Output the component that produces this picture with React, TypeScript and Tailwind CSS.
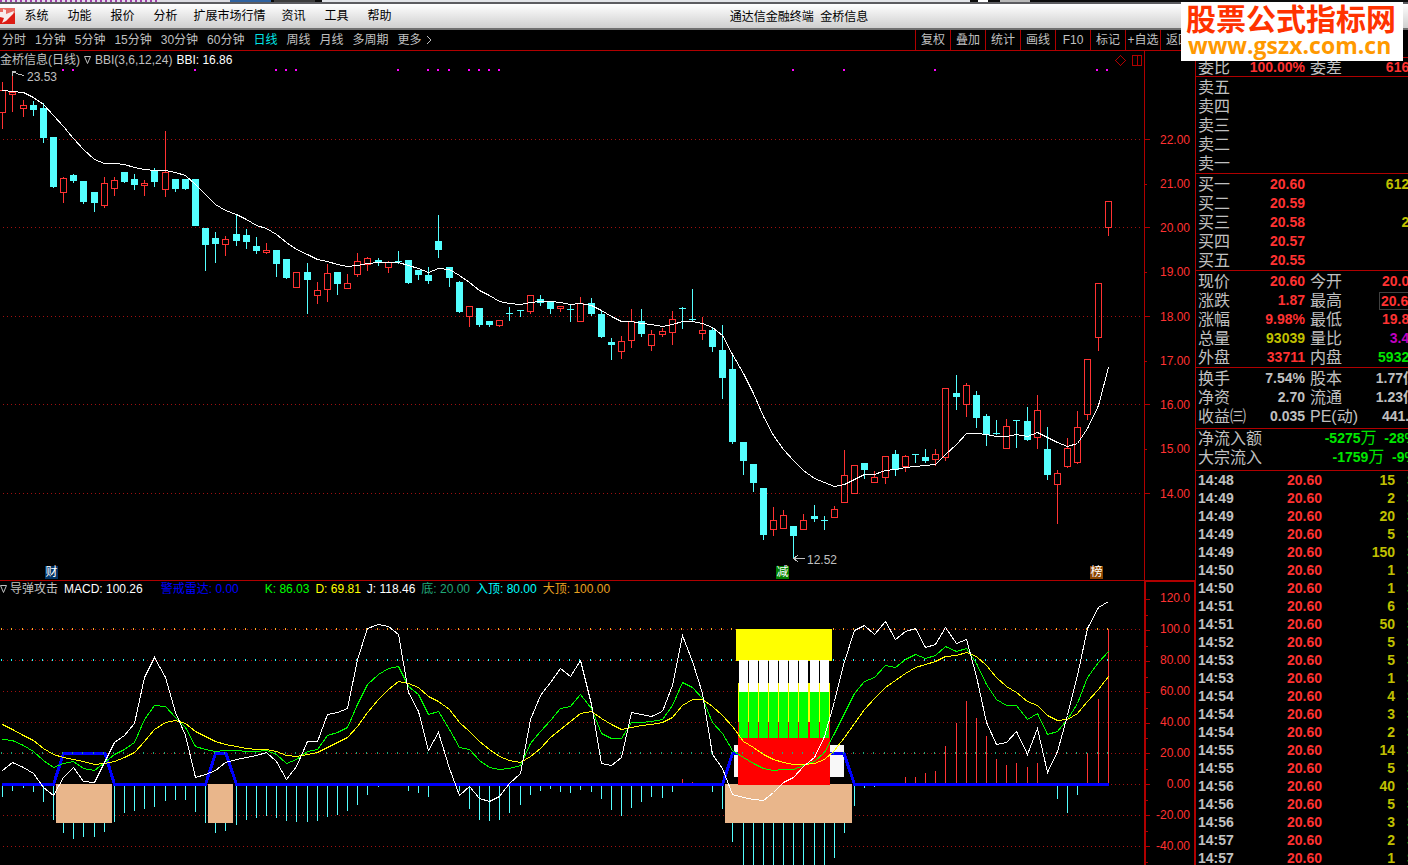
import React from "react";

type Candle = [kind: "r" | "c", high: number, top: number, bottom: number, low: number];

const PLOT_W = 1144;
const PRICE_TOP = 51;
const PRICE_H = 529;
const IND_TOP = 581;
const IND_H = 284;

const UP = "#ff3232";
const DOWN = "#54ffff";
const FRAME = "#b00000";

const barX = (i: number) => Math.floor(2.83 + 10.1412 * i);

const candles: Candle[] = [
  ["r", 82, 90, 113, 129], ["r", 73, 92, 95, 112], ["r", 100, 105, 109, 117], ["c", 101, 105, 110, 116],
  ["c", 103, 108, 138, 143], ["c", 137, 137, 187, 188], ["r", 177, 178, 193, 203], ["c", 174, 175, 181, 183],
  ["c", 181, 181, 202, 204], ["c", 192, 192, 203, 212], ["r", 177, 183, 206, 208], ["r", 177, 180, 189, 196],
  ["c", 172, 172, 182, 183], ["c", 174, 179, 185, 190], ["r", 180, 183, 186, 196], ["c", 168, 171, 182, 187],
  ["r", 131, 172, 190, 197], ["c", 179, 179, 189, 192], ["c", 179, 179, 189, 190], ["c", 179, 179, 226, 226],
  ["c", 228, 228, 245, 271], ["c", 232, 238, 244, 263], ["r", 236, 239, 245, 256], ["c", 214, 234, 241, 246],
  ["c", 229, 235, 242, 249], ["c", 237, 246, 251, 254], ["r", 243, 250, 253, 254], ["c", 250, 250, 264, 277],
  ["c", 259, 259, 278, 279], ["r", 272, 272, 288, 288], ["c", 263, 272, 280, 314], ["r", 282, 290, 296, 304],
  ["r", 264, 273, 290, 302], ["c", 272, 272, 284, 295], ["r", 274, 283, 289, 289], ["r", 253, 261, 275, 277],
  ["r", 257, 258, 265, 271], ["c", 258, 260, 263, 266], ["r", 261, 262, 268, 273], ["c", 251, 261, 262, 264],
  ["c", 260, 260, 283, 284], ["c", 270, 270, 275, 280], ["c", 267, 275, 281, 284], ["c", 215, 241, 250, 258],
  ["c", 267, 267, 278, 287], ["c", 281, 282, 312, 313], ["r", 306, 306, 317, 327], ["c", 308, 308, 325, 327],
  ["c", 321, 321, 325, 327], ["r", 320, 320, 326, 327], ["c", 307, 313, 314, 321], ["c", 310, 310, 311, 317],
  ["r", 295, 295, 312, 314], ["c", 295, 299, 303, 306], ["c", 301, 301, 309, 314], ["r", 306, 306, 309, 312],
  ["c", 305, 309, 310, 322], ["r", 297, 303, 322, 322], ["c", 298, 303, 314, 316], ["c", 310, 314, 337, 338],
  ["c", 338, 342, 345, 360], ["r", 336, 341, 352, 359], ["r", 309, 321, 341, 348], ["c", 309, 321, 334, 337],
  ["r", 330, 334, 346, 351], ["r", 328, 331, 335, 337], ["r", 311, 319, 333, 345], ["c", 307, 308, 309, 329],
  ["c", 289, 319, 320, 321], ["r", 317, 330, 334, 340], ["c", 327, 330, 347, 352], ["c", 325, 350, 378, 399],
  ["c", 356, 369, 442, 444], ["c", 442, 442, 461, 475], ["c", 464, 464, 483, 492], ["c", 488, 488, 535, 540],
  ["r", 507, 520, 530, 536], ["r", 510, 515, 529, 529], ["c", 526, 526, 536, 558], ["r", 514, 520, 530, 530],
  ["c", 505, 516, 519, 522], ["c", 516, 520, 521, 530], ["r", 506, 509, 518, 518], ["r", 450, 475, 503, 503],
  ["r", 465, 465, 494, 494], ["c", 463, 463, 470, 479], ["r", 471, 477, 483, 483], ["r", 456, 456, 478, 484],
  ["c", 450, 454, 470, 476], ["r", 455, 456, 467, 472], ["c", 454, 454, 455, 463], ["c", 449, 457, 461, 463],
  ["r", 449, 454, 460, 466], ["r", 388, 388, 458, 461], ["c", 375, 393, 397, 410], ["r", 383, 385, 405, 417],
  ["c", 391, 395, 418, 428], ["c", 414, 416, 435, 446], ["c", 420, 433, 434, 435], ["r", 419, 426, 449, 449],
  ["c", 420, 420, 421, 448], ["c", 407, 421, 440, 441], ["r", 395, 410, 438, 449], ["c", 427, 449, 475, 480],
  ["r", 470, 473, 485, 524], ["r", 438, 448, 467, 468], ["r", 411, 427, 463, 464], ["r", 359, 359, 415, 420],
  ["r", 283, 283, 338, 351], ["r", 201, 201, 228, 236],
];

const bbi = [
  90, 91, 92, 97, 104, 115, 126, 138, 149, 159, 163, 163, 164, 167, 169, 170, 170, 172, 175, 184, 194, 204, 210, 214,
  219, 225, 228, 234, 242, 249, 254, 259, 261, 264, 266, 265, 263, 262, 262, 262, 265, 268, 272, 268, 269, 275, 282,
  290, 295, 301, 303, 304, 302, 301, 301, 302, 304, 303, 305, 310, 316, 321, 321, 323, 324, 326, 324, 321, 321, 323,
  327, 335, 354, 373, 393, 416, 435, 449, 460, 470, 478, 482, 486, 484, 479, 474, 474, 470, 469, 467, 466, 465, 464,
  454, 444, 433, 433, 434, 436, 436, 434, 436, 432, 437, 442, 446, 443, 428, 405, 367,
];

const lineJ = [
  770, 762, 767, 773, 787, 795, 777, 767, 781, 782, 762, 742, 735, 723, 677, 657, 677, 712, 735, 777, 774, 770, 762,
  759, 757, 755, 752, 761, 779, 766, 741, 741, 714, 712, 708, 659, 628, 624, 626, 634, 692, 711, 750, 732, 768, 795,
  786, 798, 801, 796, 783, 773, 719, 695, 682, 668, 676, 660, 704, 763, 765, 757, 712, 714, 716, 711, 685, 635, 661,
  693, 754, 768, 794, 797, 799, 800, 792, 782, 777, 766, 757, 736, 701, 661, 630, 625, 634, 621, 639, 631, 628, 647,
  644, 627, 643, 639, 676, 722, 744, 742, 731, 754, 728, 772, 751, 715, 675, 628, 607, 601,
];

const lineK = [
  739, 740, 745, 751, 760, 767, 763, 761, 768, 770, 762, 754, 749, 742, 719, 705, 706, 717, 727, 746, 749, 751, 750,
  750, 751, 751, 750, 754, 763, 759, 751, 749, 735, 732, 727, 704, 684, 674, 668, 666, 686, 694, 714, 711, 729, 747,
  749, 760, 767, 769, 768, 765, 743, 731, 720, 708, 706, 694, 708, 733, 738, 738, 722, 722, 721, 719, 705, 682, 687,
  698, 722, 733, 750, 757, 763, 768, 770, 769, 769, 765, 761, 752, 733, 713, 693, 681, 677, 665, 667, 659, 654, 658,
  655, 646, 651, 648, 663, 684, 699, 705, 705, 719, 713, 734, 731, 719, 703, 677, 662, 651,
];

const lineD = [
  724, 729, 735, 740, 748, 754, 757, 759, 761, 764, 763, 761, 757, 752, 741, 729, 722, 720, 723, 731, 736, 741, 744,
  746, 748, 749, 749, 751, 755, 756, 754, 752, 747, 742, 737, 726, 712, 699, 689, 681, 683, 687, 696, 701, 709, 722,
  731, 741, 749, 756, 760, 762, 756, 748, 737, 729, 721, 713, 711, 718, 724, 729, 727, 725, 724, 722, 717, 705, 699,
  699, 706, 715, 726, 741, 747, 754, 759, 762, 764, 764, 763, 759, 750, 737, 723, 709, 698, 687, 680, 673, 667, 664,
  661, 656, 655, 652, 656, 665, 677, 686, 692, 701, 705, 715, 720, 719, 713, 701, 689, 676,
];

// End of each histogram bar; 784 is the zero line, 0 means no bar.
const histogram = [
  797, 791, 788, 792, 802, 820, 833, 839, 837, 837, 832, 822, 813, 811, 809, 807, 801, 800, 800, 812, 823, 833, 831,
  825, 820, 818, 816, 818, 821, 822, 822, 821, 817, 815, 811, 805, 795, 787, 0, 0, 791, 793, 797, 0, 0, 791, 809, 820,
  821, 820, 813, 805, 795, 791, 789, 792, 793, 790, 792, 799, 810, 816, 808, 802, 797, 798, 792, 779, 782, 0, 792,
  809, 842, 865, 865, 865, 865, 865, 865, 865, 865, 865, 858, 833, 806, 788, 787, 0, 0, 777, 777, 773, 771, 746, 723,
  701, 718, 736, 759, 765, 763, 767, 763, 0, 799, 813, 795, 753, 699, 629,
];

const toPoints = (ys: number[]) => ys.map((y, i) => `${barX(i) + 0.5},${y + 0.5}`).join(" ");

const signalDots = [63, 73, 195, 276, 286, 296, 398, 428, 438, 449, 469, 479, 489, 499, 793, 844, 935, 1097, 1107];

function GridLine({ y }: { y: number }) {
  return <line x1="3" x2="1141" y1={y + 0.5} y2={y + 0.5} stroke="#a01010" strokeDasharray="1 3" />;
}

function PriceChart() {
  return (
    <svg
      className="absolute inset-0 size-full"
      viewBox={`0 ${PRICE_TOP} ${PLOT_W} ${PRICE_H}`}
      preserveAspectRatio="none"
      shapeRendering="crispEdges"
      fill="none"
      aria-hidden="true"
    >
      {[139, 227, 316, 404, 493].map((y) => (
        <GridLine key={y} y={y} />
      ))}
      {signalDots.map((x) => (
        <rect key={x} x={x - 1} y="69" width="2" height="2" fill="#ff00ff" />
      ))}
      {candles.map(([kind, high, top, bottom, low], i) => {
        const x = barX(i);
        if (kind === "c") {
          return (
            <g key={i} fill={DOWN}>
              <rect x={x} y={high} width="1" height={low - high} />
              <rect x={x - 3} y={top} width="7" height={bottom - top} />
            </g>
          );
        }
        return (
          <g key={i}>
            {top > high && <rect x={x} y={high} width="1" height={top - high} fill={UP} />}
            {low > bottom && <rect x={x} y={bottom} width="1" height={low - bottom} fill={UP} />}
            <rect x={x - 2.5} y={top + 0.5} width="6" height={bottom - top - 1} stroke={UP} />
          </g>
        );
      })}
      <polyline points={toPoints(bbi)} stroke="#fff" />
      <path d="M12.5 76V71.5H16M12.5 71.5L18 74L24 75.5" stroke="#c0c0c0" />
      <path d="M793.5 558.5H805M793.5 558.5L798 555M793.5 558.5L798 562" stroke="#c0c0c0" />
      <path d="M1115.5 60.5L1120.5 55.5L1125.5 60.5L1120.5 65.5Z" stroke={FRAME} />
      <path d="M1132.5 55.5H1141.5V65.5H1132.5ZM1137.5 55.5V65.5" stroke={FRAME} />
    </svg>
  );
}

function IndicatorChart() {
  const cells = [739, 749, 759, 769, 779, 789, 799, 810, 820];
  return (
    <svg
      className="absolute inset-0 size-full"
      viewBox={`0 ${IND_TOP} ${PLOT_W} ${IND_H}`}
      preserveAspectRatio="none"
      shapeRendering="crispEdges"
      fill="none"
      aria-hidden="true"
    >
      {[629, 660, 691, 722, 753, 784, 815, 846].map((y) => (
        <GridLine key={y} y={y} />
      ))}
      {histogram.map((end, i) =>
        end === 0 ? null : end > 784 ? (
          <rect key={i} x={barX(i)} y="784" width="1" height={end - 784} fill={DOWN} />
        ) : (
          <rect key={i} x={barX(i)} y={end} width="1" height={784 - end} fill={UP} />
        ),
      )}
      <rect x="734" y="745" width="110" height="32" fill="#f8f8f8" />
      <polyline
        points="2,784.5 53.5,784.5 63.5,753.5 105,753.5 114.5,784.5 205.5,784.5 215.5,753.5 226,753.5 236.5,784.5 722.5,784.5 732.5,753.5 844,753.5 854.5,784.5 1109,784.5"
        stroke="#0000ff"
        strokeWidth="3"
      />
      <g fill="#e9b68b">
        <rect x="56" y="784" width="56" height="39" />
        <rect x="208" y="784" width="25" height="39" />
        <rect x="725" y="784" width="127" height="39" />
      </g>
      <rect x="736" y="629" width="96" height="32" fill="#ffff00" />
      <rect x="738" y="661" width="92" height="22" fill="#000" />
      <rect x="738" y="683" width="92" height="39" fill="#ffff00" />
      <rect x="738" y="722" width="92" height="63" fill="#ff0000" />
      {cells.map((x) => (
        <g key={x}>
          <rect x={x} y="660" width="9" height="32" fill="#fff" />
          <rect x={x} y="692" width="9" height="46" fill="#00ff00" />
        </g>
      ))}
      {candles.map((_, i) => (
        <g key={i}>
          {(barX(i) < 736 || barX(i) > 832) && <rect x={barX(i) - 1} y="628" width="1" height="2" fill="#ffa820" />}
          {(barX(i) < 736 || barX(i) > 832) && <rect x={barX(i) - 1} y="659" width="1" height="2" fill="#20ffff" />}
          <rect x={barX(i) - 1} y="752" width="1" height="2" fill="#20a878" />
        </g>
      ))}
      <polyline points={toPoints(lineK)} stroke="#00ff00" />
      <polyline points={toPoints(lineD)} stroke="#ffff00" />
      <polyline points={toPoints(lineJ)} stroke="#fff" />
    </svg>
  );
}

function PriceTicks() {
  return (
    <svg
      className="absolute inset-y-0 left-0 h-full w-[6px]"
      viewBox={`0 ${PRICE_TOP} 6 ${PRICE_H}`}
      preserveAspectRatio="none"
      shapeRendering="crispEdges"
      fill={FRAME}
      aria-hidden="true"
    >
      {[139, 227, 316, 404, 493].map((y) => (
        <rect key={y} x="0" y={y} width="5" height="1" />
      ))}
      {[184, 272, 361, 449].map((y) => (
        <rect key={y} x="0" y={y} width="2" height="1" />
      ))}
    </svg>
  );
}

function IndicatorTicks() {
  return (
    <svg
      className="absolute inset-y-0 left-0 h-full w-[6px]"
      viewBox={`0 ${IND_TOP} 6 ${IND_H}`}
      preserveAspectRatio="none"
      shapeRendering="crispEdges"
      fill={FRAME}
      aria-hidden="true"
    >
      {[598, 629, 660, 691, 722, 753, 784, 815, 846].map((y) => (
        <g key={y}>
          <rect x="0" y={y} width="4" height="1" />
          <rect x="0" y={y + 16} width="2" height="1" />
        </g>
      ))}
    </svg>
  );
}

function Mark({ x, y, className, children }: { x: number; y: number; className: string; children: React.ReactNode }) {
  return (
    <span
      className={`absolute leading-[13px] ${className}`}
      style={{ left: `${(x / PLOT_W) * 100}%`, top: `${((y - PRICE_TOP) / PRICE_H) * 100}%` }}
    >
      {children}
    </span>
  );
}

type Cell = { label: string; value: string; tone: string };

const RED = "text-[#ff3232]";
const YEL = "text-[#c0c000]";
const GRN = "text-[#00e600]";
const GRY = "text-[#c0c0c0]";
const MAG = "text-[#c000c0]";

function QuoteRow({ a, b, boxed }: { a: Cell; b?: Cell; boxed?: boolean }) {
  return (
    <tr className="h-[19px] leading-[19px]">
      <th scope="row" className="w-[50px] p-0 text-left text-base leading-[19px] font-normal">
        {a.label}
      </th>
      <td className={`w-[57px] p-0 text-right font-bold ${a.tone}`}>{a.value}</td>
      <th scope="row" className="w-[45px] p-0 pl-[5px] text-left text-base leading-[19px] font-normal">
        {b?.label}
      </th>
      <td className={`p-0 text-right font-bold ${b?.tone ?? ""}`}>
        <span className={boxed ? "ml-auto block h-[18px] w-[38px] border border-[#404040] leading-4" : ""}>
          {b?.value}
        </span>
      </td>
    </tr>
  );
}

function Section({ className, children }: { className: string; children: React.ReactNode }) {
  return (
    <section className={`shrink-0 border-t border-[#b00000] pl-[2px] ${className}`}>
      <table className="w-[219px] table-fixed border-collapse">
        <tbody>{children}</tbody>
      </table>
    </section>
  );
}

const ticks: [string, number][] = [
  ["14:48", 15], ["14:49", 2], ["14:49", 20], ["14:49", 5], ["14:49", 150], ["14:50", 1], ["14:50", 1], ["14:51", 6],
  ["14:51", 50], ["14:52", 5], ["14:53", 5], ["14:53", 1], ["14:54", 4], ["14:54", 3], ["14:54", 2], ["14:55", 14],
  ["14:55", 5], ["14:56", 40], ["14:56", 5], ["14:56", 3], ["14:57", 2], ["14:57", 1],
];

function QuotePanel() {
  const none: Cell = { label: "", value: "", tone: "" };
  const c = (label: string, value = "", tone = RED): Cell => ({ label, value, tone });
  return (
    <aside className="flex w-[213px] shrink-0 flex-col overflow-hidden border-l border-[#b00000] text-sm">
      <div className="h-[27px] shrink-0" />
      <Section className="h-[19px]">
        <QuoteRow a={c("委比", "100.00%")} b={c("委差", "6166")} />
      </Section>
      <Section className="pt-px">
        {["卖五", "卖四", "卖三", "卖二", "卖一"].map((l) => (
          <QuoteRow key={l} a={c(l)} b={none} />
        ))}
      </Section>
      <Section className="pt-px">
        <QuoteRow a={c("买一", "20.60")} b={c("", "6120", YEL)} />
        <QuoteRow a={c("买二", "20.59")} b={none} />
        <QuoteRow a={c("买三", "20.58")} b={c("", "20", YEL)} />
        <QuoteRow a={c("买四", "20.57")} b={none} />
        <QuoteRow a={c("买五", "20.55")} b={none} />
      </Section>
      <Section className="pt-px">
        <QuoteRow a={c("现价", "20.60")} b={c("今开", "20.00")} />
        <QuoteRow a={c("涨跌", "1.87")} b={c("最高", "20.60")} boxed />
        <QuoteRow a={c("涨幅", "9.98%")} b={c("最低", "19.80")} />
        <QuoteRow a={c("总量", "93039", YEL)} b={c("量比", "3.40", MAG)} />
        <QuoteRow a={c("外盘", "33711")} b={c("内盘", "59328", GRN)} />
      </Section>
      <Section className="pt-px pb-[2px]">
        <QuoteRow a={c("换手", "7.54%", GRY)} b={c("股本", "1.77亿", GRY)} />
        <QuoteRow a={c("净资", "2.70", GRY)} b={c("流通", "1.23亿", GRY)} />
        <QuoteRow a={c("收益㈢", "0.035", GRY)} b={c("PE(动)", "441.0", GRY)} />
      </Section>
      <section className="h-[42px] shrink-0 border-t border-[#b00000] pl-[2px]">
        <table className="w-[219px] border-collapse">
          <tbody>
            {[
              ["净流入额", "-5275", "-28%"],
              ["大宗流入", "-1759", "-9%"],
            ].map(([label, amount, share]) => (
              <tr key={label} className="h-[19px]">
                <th scope="row" className="p-0 text-left text-base leading-[19px] font-normal">
                  {label}
                </th>
                <td className={`p-0 text-right leading-[19px] font-bold whitespace-pre ${GRN}`}>
                  {amount}
                  <span className="text-base leading-[18px] font-normal">万</span>
                  {"  "}
                  {share}
                </td>
              </tr>
            ))}
          </tbody>
        </table>
      </section>
      <section className="min-h-0 flex-1 overflow-hidden border-t border-[#b00000] pl-[2px]">
        <table className="w-[219px] table-fixed border-collapse leading-[18px] font-bold">
          <tbody>
            {ticks.map(([time, volume], i) => (
              <tr key={i} className="h-[18px]">
                <td className="w-[87px] p-0">{time}</td>
                <td className={`w-[37px] p-0 text-right ${RED}`}>20.60</td>
                <td className={`w-[73px] p-0 text-right ${YEL}`}>{volume}</td>
                <td className={`p-0 pl-3 ${GRN}`}>S</td>
              </tr>
            ))}
          </tbody>
        </table>
      </section>
    </aside>
  );
}

function Logo() {
  return (
    <svg className="h-4 w-[15px] shrink-0" viewBox="0 0 15 16" aria-hidden="true">
      <rect width="15" height="16" fill="#dc1c14" />
      <path d="M0 0H15V5L9 7H0Z" fill="#ea6a62" />
      <path d="M0 4H3V1L6 2L6 6L14 3L13 6L9 10L6 13L2 15L4 10L0 9Z" fill="#f8ecec" />
    </svg>
  );
}

function Menu({ children }: { children: React.ReactNode }) {
  return (
    <button type="button" className="w-[43px] text-center">
      {children}
    </button>
  );
}

export default function App() {
  return (
    <div className="relative flex h-screen flex-col overflow-hidden bg-black font-['Liberation_Sans','Noto_Sans_CJK_SC',sans-serif] text-xs text-[#c0c0c0]">
      <div className="flex h-[2px] shrink-0 bg-[#0c0c0c]">
        <span className="w-[160px] bg-[repeating-linear-gradient(90deg,#a040a8_0px_2px,#e4dcec_2px_5px)]" />
        <span className="w-[70px] bg-[#dcdce2]" />
        <span className="w-[41px] bg-[#2f62a0]" />
        <span className="mx-[3px] w-[41px] bg-[#3c3c3c]" />
        <span className="mx-1 w-[648px] bg-[#e2e4e8]" />
        <span className="mx-1 w-[10px] bg-white" />
        <span className="ml-2 w-[30px] bg-[#b8b8b8]" />
      </div>
      <header className="flex h-7 shrink-0 items-center border-y-2 border-t-[#5c5c60] border-b-[#707070] bg-linear-to-b from-white to-[#cfcfcf] text-black">
        <Logo />
        <nav className="flex leading-6">
          <Menu>系统</Menu>
          <Menu>功能</Menu>
          <Menu>报价</Menu>
          <Menu>分析</Menu>
          <button type="button" className="w-[85px] text-center">
            扩展市场行情
          </button>
          <Menu>资讯</Menu>
          <Menu>工具</Menu>
          <Menu>帮助</Menu>
        </nav>
        <h1 className="flex-1 pt-[2px] text-center whitespace-pre">{"通达信金融终端  金桥信息"}</h1>
        <div className="w-[211px]" />
      </header>

      <div className="flex min-h-0 flex-1">
        <main className="flex min-w-0 flex-1 flex-col">
          <div className="flex h-[21px] shrink-0 border-b border-[#b00000] leading-5">
            <nav className="flex flex-1 gap-[9px] pl-[2px] whitespace-nowrap">
              <button type="button">分时</button>
              <button type="button">1分钟</button>
              <button type="button">5分钟</button>
              <button type="button">15分钟</button>
              <button type="button">30分钟</button>
              <button type="button">60分钟</button>
              <button type="button" className="text-[#00e6e6]">
                日线
              </button>
              <button type="button">周线</button>
              <button type="button">月线</button>
              <button type="button">多周期</button>
              <button type="button" className="flex items-center gap-1">
                更多
                <svg className="h-2 w-[6px]" viewBox="0 0 6 8" fill="none" stroke="#c0c0c0" aria-hidden="true">
                  <path d="M1 0L5 4L1 8" />
                </svg>
              </button>
            </nav>
            <div className="flex whitespace-nowrap">
              {["复权", "叠加", "统计", "画线", "F10", "标记", "+自选", "返回"].map((t) => (
                <button key={t} type="button" className="w-[35px] border-l border-[#b00000] text-center">
                  {t}
                </button>
              ))}
            </div>
          </div>

          <div className="flex min-h-0 flex-[529]">
            <section className="relative min-w-0 flex-1">
              <PriceChart />
              <p className="relative flex gap-1 leading-[18px]">
                <span>金桥信息(日线)</span>
                <svg className="mt-[5px] h-2 w-[7px]" viewBox="0 0 7 8" fill="none" stroke="#c0c0c0" aria-hidden="true">
                  <path d="M.5.5H6.500L3.500 7.500Z" />
                </svg>
                <span>BBI(3,6,12,24)</span>
                <span className="text-white">BBI: 16.86</span>
              </p>
              <Mark x={27} y={71} className="">23.53</Mark>
              <Mark x={807} y={554} className="">12.52</Mark>
              <Mark x={45} y={566} className="size-[13px] bg-[#003366] text-center text-white">财</Mark>
              <Mark x={776} y={566} className="size-[13px] bg-[#008000] text-center text-white">减</Mark>
              <Mark x={1090} y={566} className="size-[13px] bg-[#8b4500] text-center text-white">榜</Mark>
            </section>
            <div className="relative flex w-[51px] flex-col border-l border-[#b00000] pr-[5px] text-right text-[#ff3232]">
              <PriceTicks />
              <span className="flex-[66]" />
              {["22.00", "21.00", "20.00", "19.00", "18.00", "17.00", "16.00", "15.00", "14.00"].map((v) => (
                <span key={v} className="flex flex-[44] items-center justify-end">
                  {v}
                </span>
              ))}
              <span className="flex-[64]" />
            </div>
          </div>

          <div className="flex min-h-0 flex-[285]">
            <section className="relative min-w-0 flex-1 border-t border-[#b00000]">
              <IndicatorChart />
              <p className="relative flex gap-[6px] leading-4 whitespace-nowrap">
                <span className="flex gap-[3px]">
                  <svg className="mt-1 h-2 w-[7px]" viewBox="0 0 7 8" fill="none" stroke="#c0c0c0" aria-hidden="true">
                    <path d="M.5.5H6.500L3.500 7.500Z" />
                  </svg>
                  导弹攻击
                </span>
                <span className="text-white">MACD: 100.26</span>
                <span className="ml-3 text-[#0000ff]">警戒雷达: 0.00</span>
                <span className="ml-5 text-[#00ff00]">K: 86.03</span>
                <span className="text-[#ffff00]">D: 69.81</span>
                <span className="text-white">J: 118.46</span>
                <span className="text-[#20a878]">底: 20.00</span>
                <span className="text-[#00ffff]">入顶: 80.00</span>
                <span className="text-[#e8a020]">大顶: 100.00</span>
              </p>
            </section>
            <div className="relative flex w-[52px] -mr-px flex-col border-2 border-b-0 border-[#b00000] pr-1 text-right text-[#ff3232]">
              <IndicatorTicks />
              {["120.0", "100.0", "80.00", "60.00", "40.00", "20.00", "0.00", "-20.00", "-40.00"].map((v) => (
                <span key={v} className="flex flex-[31] items-center justify-end">
                  {v}
                </span>
              ))}
              <span className="flex-[4]" />
            </div>
          </div>
        </main>
        <QuotePanel />
      </div>

      <div className="absolute top-[2px] right-[5px] flex h-[59px] w-[222px] flex-col bg-white pl-[5px] font-bold whitespace-nowrap">
        <span className="text-[30px] leading-[36px] text-[#ff3300]">股票公式指标网</span>
        <span className="pl-[2px] font-['Open_Sans',sans-serif] text-[23px] leading-[14px] text-[#ff9900]">
          www.gszx.com.cn
        </span>
      </div>
    </div>
  );
}
